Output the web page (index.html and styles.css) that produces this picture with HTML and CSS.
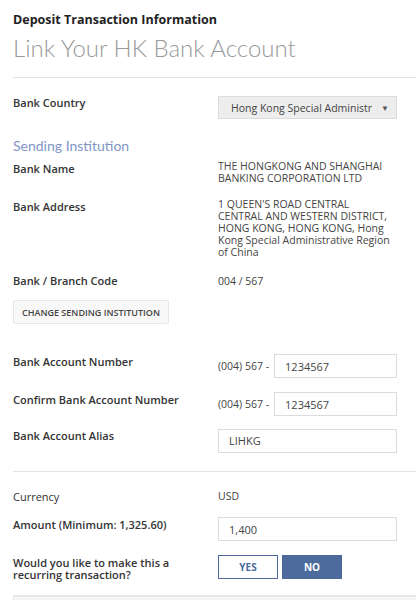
FILE: index.html
```html
<!DOCTYPE html>
<html lang="en">
<head>
  <meta charset="UTF-8" />
  <meta name="viewport" content="width=device-width, initial-scale=1.0"/>
  <title>Deposit Transaction Information</title>
  <link rel="stylesheet" href="styles.css">
</head>
<body>

  <div class="page">
    <h2 class="kicker">Deposit Transaction Information</h2>
    <h1 class="title">Link Your HK Bank Account</h1>

    <hr class="divider">

    <div class="row row-country">
      <div class="label">Bank Country</div>
      <div class="value">
        <div class="select">
          <span class="select-text">Hong Kong Special Administr</span>
          <span class="caret">&#9660;</span>
        </div>
      </div>
    </div>

    <h3 class="section">Sending Institution</h3>

    <div class="row row-name">
      <div class="label">Bank Name</div>
      <div class="value text">THE HONGKONG AND SHANGHAI<br>BANKING CORPORATION LTD</div>
    </div>

    <div class="row row-address">
      <div class="label">Bank Address</div>
      <div class="value text">1 QUEEN'S ROAD CENTRAL<br>CENTRAL AND WESTERN DISTRICT,<br>HONG KONG, HONG KONG, Hong<br>Kong Special Administrative Region<br>of China</div>
    </div>

    <div class="row row-code">
      <div class="label">Bank / Branch Code</div>
      <div class="value text">004 / 567</div>
    </div>

    <button class="btn-change">CHANGE SENDING INSTITUTION</button>

    <div class="row row-input row-account">
      <div class="label">Bank Account Number</div>
      <div class="value prefixed">
        <span class="prefix">(004) 567 -</span>
        <input class="field" type="text" value="1234567">
      </div>
    </div>

    <div class="row row-input row-confirm">
      <div class="label">Confirm Bank Account Number</div>
      <div class="value prefixed">
        <span class="prefix">(004) 567 -</span>
        <input class="field" type="text" value="1234567">
      </div>
    </div>

    <div class="row row-input row-alias">
      <div class="label">Bank Account Alias</div>
      <div class="value">
        <input class="field" type="text" value="LIHKG">
      </div>
    </div>

    <hr class="divider divider-mid">

    <div class="row row-currency">
      <div class="label light">Currency</div>
      <div class="value text">USD</div>
    </div>

    <div class="row row-input row-amount">
      <div class="label">Amount (Minimum: 1,325.60)</div>
      <div class="value">
        <input class="field" type="text" value="1,400">
      </div>
    </div>

    <div class="row row-recurring">
      <div class="label">Would you like to make this a<br>recurring transaction?</div>
      <div class="value toggle">
        <button class="opt">YES</button>
        <button class="opt active">NO</button>
      </div>
    </div>

    <div class="panel"></div>
  </div>

</body>
</html>
```

FILE: styles.css
```css
body {
  margin: 0;
  font-family: "Open Sans", "Lato", sans-serif;
  color: #333;
  background: #fff;
}

.page {
  padding: 10px 0 0 13px;
  height: 590px;
  overflow: hidden;
}

.kicker {
  margin: 0;
  font-size: 12.5px;
  line-height: 20px;
  font-weight: 700;
  color: #222;
}

.title {
  margin: 4px 0 0;
  font-family: "Lato", sans-serif;
  font-size: 24px;
  line-height: 28px;
  font-weight: 300;
  color: #999;
}

.divider {
  border: none;
  border-top: 1px solid #e3e3e3;
  margin: 15px 0 0;
}

.row {
  display: grid;
  grid-template-columns: 205px 179px;
  align-items: start;
}

.label {
  font-size: 11px;
  line-height: 14px;
  font-weight: 600;
  color: #333;
  white-space: nowrap;
}

.label.light {
  font-weight: 400;
}

.value.text {
  font-size: 10.5px;
  line-height: 12px;
  color: #444;
  white-space: nowrap;
}

.row-country {
  margin-top: 18px;
}

.select {
  display: flex;
  align-items: center;
  justify-content: space-between;
  height: 21px;
  padding: 0 7px 0 12px;
  background: #ededed;
  border: 1px solid #dcdcdc;
  font-size: 10.5px;
  color: #444;
}

.select-text {
  white-space: nowrap;
}

.caret {
  font-size: 8px;
  color: #555;
}

.section {
  margin: 18px 0 0;
  font-family: "Lato", sans-serif;
  font-size: 14px;
  line-height: 18px;
  font-weight: 400;
  color: #7f95c6;
}

.row-name {
  margin-top: 5px;
}

.row-name .label,
.row-address .label {
  padding-top: 2px;
}

.row-address {
  margin-top: 14px;
}

.row-code {
  margin-top: 16px;
}

.row-code .value.text {
  line-height: 14px;
}

.btn-change {
  display: block;
  box-sizing: border-box;
  margin-top: 12px;
  height: 24px;
  padding: 0 8px;
  background: #f8f8f8;
  border: 1px solid #e6e6e6;
  border-radius: 2px;
  font-family: inherit;
  font-size: 9px;
  font-weight: 600;
  color: #444;
}

.row-input .label {
  padding-top: 1px;
}

.row-account {
  margin-top: 30px;
}

.row-input.row-confirm {
  margin-top: 14px;
}

.row-input.row-alias {
  margin-top: 12px;
}

.prefixed {
  display: flex;
  align-items: center;
}

.prefix {
  font-size: 10.5px;
  color: #444;
  margin-right: 5px;
  white-space: nowrap;
}

.field {
  box-sizing: border-box;
  width: 100%;
  height: 24px;
  padding: 0 10px;
  border: 1px solid #dcdcdc;
  font-family: inherit;
  font-size: 11px;
  color: #444;
  background: #fff;
}

.prefixed .field {
  width: 123px;
}

.divider-mid {
  margin: 18px 0 0;
}

.row-currency {
  margin-top: 18px;
}

.row-amount {
  margin-top: 13px;
}

.row-recurring {
  margin-top: 14px;
}

.row-recurring .label {
  line-height: 12px;
  padding-top: 2px;
}

.toggle {
  display: flex;
  gap: 4px;
}

.opt {
  width: 60px;
  height: 24px;
  font-family: inherit;
  font-size: 10px;
  font-weight: 700;
  border: 1px solid #4b6a9c;
  background: #fff;
  color: #4b6a9c;
}

.opt.active {
  background: #4d6c9d;
  color: #fff;
}

.panel {
  margin-top: 14px;
  height: 40px;
  background: #f5f5f5;
  border-top: 2px solid #e8e8e8;
  border-left: 1px solid #e8e8e8;
}
```
